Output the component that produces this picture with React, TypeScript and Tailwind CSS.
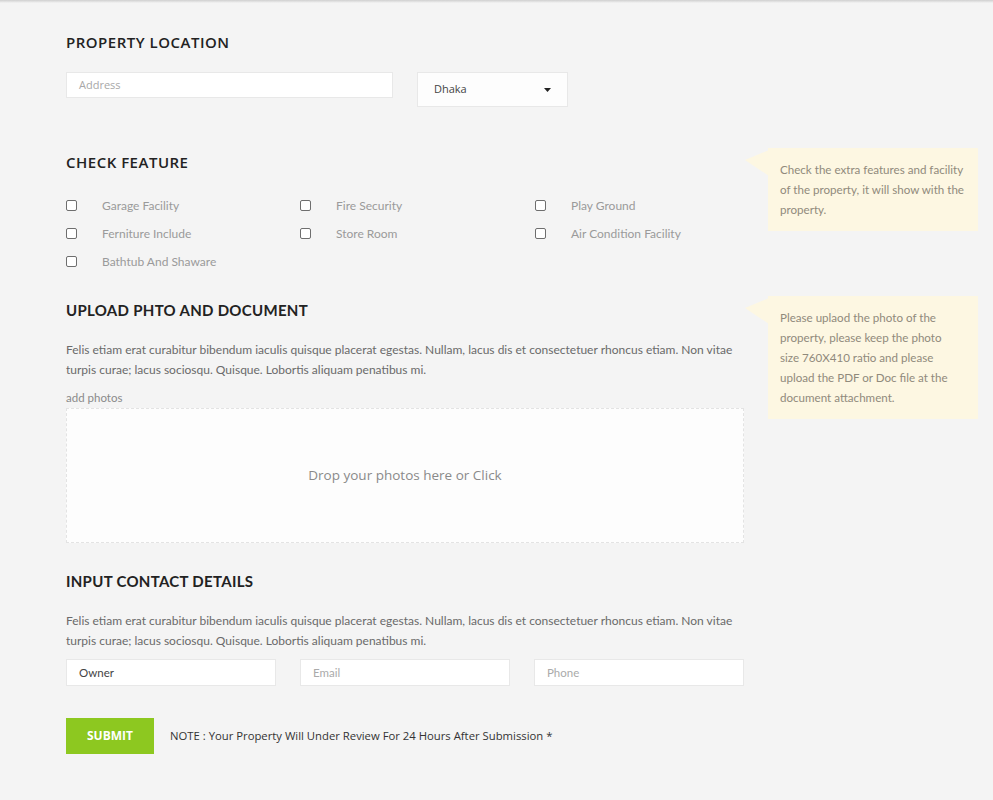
import React from "react";

const heading = "text-[15px] leading-[20px] font-semibold text-[#222] uppercase tracking-[0.5px]";
const heading2 = "text-[15px] leading-[20px] font-bold text-[#222] uppercase tracking-[0.3px]";
const mont = { fontFamily: '"Open Sans", "Liberation Sans", sans-serif' } as React.CSSProperties;
const rale = { fontFamily: 'Lato, "Liberation Sans", sans-serif' } as React.CSSProperties;

function Tip({ lines }: { lines: string[] }) {
  return (
    <div className="relative w-[210px] bg-[#fdf7e2] pl-[12px] pr-[8px] pt-[12px] pb-[11px]">
      <svg className="absolute left-[-23px] top-[2px]" width="24" height="26" viewBox="0 0 24 26">
        <polygon points="24,0 0,10 24,26" fill="#fdf7e2" />
      </svg>
      {lines.map((l, i) => (
        <div key={i} className="text-[11.6px] leading-[20px] text-[#908a7c] whitespace-nowrap" style={rale}>
          {l}
        </div>
      ))}
    </div>
  );
}

function Check({ label }: { label: string }) {
  return (
    <div className="flex items-center h-[28px]">
      <span className="w-[11px] h-[11px] border border-[#6e6e6e] rounded-[2px] bg-white shrink-0 -mt-[2px]" />
      <span className="ml-[25px] text-[12px] text-[#9a9a9a]" style={rale}>{label}</span>
    </div>
  );
}

const para =
  "Felis etiam erat curabitur bibendum iaculis quisque placerat egestas. Nullam, lacus dis et consectetuer rhoncus etiam. Non vitae turpis curae; lacus sociosqu. Quisque. Lobortis aliquam penatibus mi.";

export default function App() {
  return (
    <div className="min-h-[800px] bg-[#f4f4f4] relative">
      <div className="h-[3px] bg-gradient-to-b from-[#cfcfcf] to-[#f4f4f4]" />
      <div className="pl-[66px] pt-[29px] flex flex-col">
        {/* Section 1 */}
        <div className="w-[678px]">
          <h2 className={heading} style={mont}>Property Location</h2>
          <div className="mt-[20px] flex items-start">
            <div className="w-[327px] h-[26px] bg-white border border-[#e8e8e8] flex items-center pl-[12px] text-[11px] text-[#a8a8a8]" style={mont}>
              Address
            </div>
            <div className="ml-[24px] w-[151px] h-[35px] bg-[#fdfdfd] border border-[#e8e8e8] flex items-center pl-[16px] pr-[16px] justify-between text-[11px] text-[#444]" style={mont}>
              <span>Dhaka</span>
              <svg width="7" height="4" viewBox="0 0 7 4"><polygon points="0,0 7,0 3.5,4" fill="#222" /></svg>
            </div>
          </div>
        </div>

        {/* Section 2 */}
        <div className="mt-[41px] flex items-start">
          <div className="w-[678px] pt-[4px]">
            <h2 className={heading} style={mont}>Check Feature</h2>
            <div className="mt-[20px] grid grid-cols-[234px_235px_1fr]">
              <Check label="Garage Facility" />
              <Check label="Fire Security" />
              <Check label="Play Ground" />
              <Check label="Ferniture Include" />
              <Check label="Store Room" />
              <Check label="Air Condition Facility" />
              <Check label="Bathtub And Shaware" />
            </div>
          </div>
          <div className="ml-[24px]">
            <Tip lines={["Check the extra features and facility", "of the property, it will show with the", "property."]} />
          </div>
        </div>

        {/* Section 3 */}
        <div className="mt-[20px] flex items-start">
          <div className="w-[678px] pt-[4px]">
            <h2 className={heading2} style={rale}>Upload Phto And Document</h2>
            <p className="mt-[20px] text-[12px] leading-[20px] text-[#6a6a6a]" style={rale}>{para}</p>
            <div className="mt-[8px] text-[11.5px] leading-[20px] text-[#8a8a8a]" style={rale}>add photos</div>
            <div className="h-[135px] bg-[#fdfdfd] border border-dashed border-[#e3e3e3] flex items-center justify-center text-[13.5px] text-[#8a8a8a]" style={mont}>
              Drop your photos here or Click
            </div>
          </div>
          <div className="ml-[24px]">
            <Tip
              lines={[
                "Please uplaod the photo of the",
                "property, please keep the photo",
                "size 760X410 ratio and please",
                "upload the PDF or Doc file at the",
                "document attachment.",
              ]}
            />
          </div>
        </div>

        {/* Section 4 */}
        <div className="w-[678px] mt-[28px]">
          <h2 className={heading2} style={rale}>Input Contact Details</h2>
          <p className="mt-[20px] text-[12px] leading-[20px] text-[#6a6a6a]" style={rale}>{para}</p>
          <div className="mt-[8px] grid grid-cols-3 gap-[24px]">
            <div className="h-[27px] bg-white border border-[#e8e8e8] flex items-center pl-[12px] text-[11.5px] text-[#444]" style={rale}>Owner</div>
            <div className="h-[27px] bg-white border border-[#e8e8e8] flex items-center pl-[12px] text-[11.5px] text-[#aaa]" style={rale}>Email</div>
            <div className="h-[27px] bg-white border border-[#e8e8e8] flex items-center pl-[12px] text-[11.5px] text-[#aaa]" style={rale}>Phone</div>
          </div>
          <div className="mt-[32px] flex items-center">
            <button className="w-[88px] h-[36px] bg-[#8dc820] text-white text-[12px] font-bold uppercase" style={mont}>Submit</button>
            <span className="ml-[16px] text-[11.3px] text-[#333]" style={mont}>NOTE : Your Property Will Under Review For 24 Hours After Submission *</span>
          </div>
        </div>
      </div>
    </div>
  );
}
